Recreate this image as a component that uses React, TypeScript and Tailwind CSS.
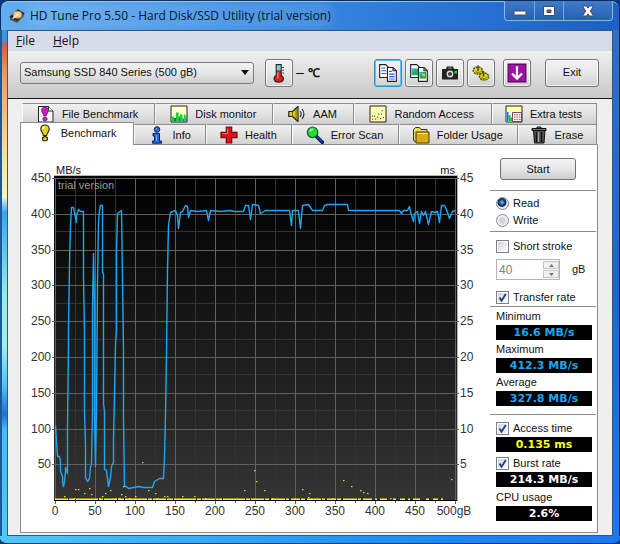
import React, { useState } from 'react';

type IconProps = { children: React.ReactNode; className?: string };

function Icon({ children, className = 'size-[18px]' }: IconProps) {
  return (
    <svg viewBox="0 0 18 18" className={`${className} shrink-0`} aria-hidden="true">
      {children}
    </svg>
  );
}

const FileBenchIcon = () => (
  <Icon>
    <path d="M1.500 1.500h10l4.500 4.500v11h-14.500z" fill="#f4f4f4" stroke="#222" />
    <path d="M11.500 1.500v4.500h4.500" fill="#fff" stroke="#222" />
    <path d="M8 2c-2.200 0-3.400 1.400-3.400 3.200C4.600 7.800 6.500 8.500 6.800 11h2.400c.3-2.500 2.200-3.200 2.200-5.800C11.400 3.400 10.200 2 8 2z" fill="#d416d4" stroke="#333" strokeWidth=".8" />
    <ellipse cx="8" cy="14" rx="2.200" ry="1.800" fill="#d416d4" stroke="#333" strokeWidth=".8" />
  </Icon>
);

const BenchIcon = () => (
  <Icon>
    <path d="M9 1C6.500 1 4.800 2.600 4.800 5c0 2.600 2.200 3.600 2.600 6.500h3.200C11 8.600 13.200 7.600 13.200 5c0-2.400-1.700-4-4.200-4z" fill="#e0d810" stroke="#222" strokeWidth="1.100" />
    <path d="M7 5c0-1.300.8-2.200 2-2.200" stroke="#fff" strokeWidth="1.300" fill="none" />
    <ellipse cx="9" cy="14.700" rx="2.500" ry="2.100" fill="#e0d810" stroke="#222" strokeWidth="1.100" />
  </Icon>
);

const DiskMonitorIcon = () => (
  <Icon>
    <path d="M1 1h16v16H1z" fill="#ffffd0" stroke="#222" />
    <path d="M1.500 16.500v-5H4v5zM6 16.500V7.500h2.500v9zM10 16.500V9.500h2.500v7zM14 16.500v-7h1.500v7z" fill="#10d820" />
    <path d="M4 16.500v-3.500h2v3.500zM8.500 16.500v-5H10v5zM12.500 16.500v-3H14v3zM15.500 16.500v-5h1v5z" fill="#2060e8" />
  </Icon>
);

const SpeakerIcon = () => (
  <Icon>
    <path d="M.8 6.500h3.700L10 1.500v15L4.500 11.500H.8z" fill="#e0d410" stroke="#222" strokeWidth="1.200" strokeLinejoin="round" />
    <path d="M4.500 6.500v5M8 4v10" stroke="#6b6400" />
    <path d="M12 6c1.300 1.700 1.300 4.300 0 6M14 4c2.300 3 2.300 7 0 10" stroke="#333" strokeWidth="1.200" fill="none" />
  </Icon>
);

const RandomIcon = () => (
  <Icon>
    <path d="M1 1h16v16H1z" fill="#ffffb0" stroke="#222" />
    <path d="M3 13.500h1.200v1.200H3zM5 10.500h1.200v1.200H5zM8 11.500h1.200v1.200H8zM11 13h1.200v1.200H11zM12 8.500h1.200v1.200H12z" fill="#e02020" />
    <path d="M3 10.500h1.200v1.200H3zM6 13.500h1.200v1.200H6zM9 8.500h1.200v1.200H9zM12.500 5h1.200v1.200h-1.200zM13.800 12H15v1.200h-1.200z" fill="#3050e0" />
  </Icon>
);

const ExtraIcon = () => (
  <Icon>
    <path d="M1 1h16v16H1z" fill="#ffffa8" stroke="#222" />
    <path d="M1.500 7h15v9.500h-15z" fill="#fff" />
    <path d="M1.500 7h2v9.500h-2z" fill="#2060e8" />
    <path d="M3.500 10h2v6.500h-2zM5.500 12.500h2v4h-2z" fill="#10c828" />
    <path d="M7.500 7.500h9v9h-9z" fill="#fff0f4" stroke="#333" strokeWidth=".8" />
    <path d="M9 9.700h6.500M9 12h6.500M9 14.300h6.500" stroke="#e03060" strokeDasharray="1.500 1" />
  </Icon>
);

const InfoIcon = () => (
  <Icon>
    <circle cx="9" cy="3.500" r="2.800" fill="#1e6ae0" stroke="#102050" />
    <path d="M5 7.500h6.500V15h2v2.200h-9V15h2v-5H5z" fill="#1e6ae0" stroke="#102050" />
    <path d="M8.500 9v6M8 3.500c0-.6.400-1 1-1" stroke="#6ab0ff" fill="none" />
  </Icon>
);

const HealthIcon = () => (
  <Icon>
    <path d="M6.300 1h5.400v5.300H17v5.400h-5.300V17H6.300v-5.300H1V6.300h5.300z" fill="#d81818" stroke="#6b0c0c" strokeWidth="1.200" strokeLinejoin="round" />
    <path d="M7.500 2.500v5H2.500" stroke="#ff7070" fill="none" />
  </Icon>
);

const ScanIcon = () => (
  <Icon>
    <path d="M10.500 10.500l5.800 5.800" stroke="#101050" strokeWidth="3.600" strokeLinecap="round" />
    <path d="M11 10.500l5 5" stroke="#2848d0" strokeWidth="1.500" />
    <circle cx="6.600" cy="6.300" r="5.300" fill="#28d838" stroke="#186020" strokeWidth="1.200" />
    <path d="M3.800 5.500c.5-1.500 1.500-2 3-2" stroke="#c8ffc8" strokeWidth="1.500" fill="none" />
  </Icon>
);

const FolderIcon = () => (
  <Icon>
    <path d="M1.500 3.500l2-2h4l1.500 2h6v12h-12l-1.500-1z" fill="#f0d860" stroke="#333" />
    <path d="M4 6h13v11H4z" fill="#d8ac18" stroke="#4a3a08" />
    <path d="M5.500 7.500h10" stroke="#fff0a0" />
  </Icon>
);

const EraseIcon = () => (
  <Icon>
    <path d="M3.500 4.500h11.500l-1 12.500h-9.500z" fill="#555" stroke="#111" />
    <path d="M6.500 6v10M11.500 6v10" stroke="#111" strokeWidth="1.500" />
    <path d="M8.500 6v10" stroke="#aaa" strokeWidth="1.200" />
    <path d="M2 2.500h14v2H2zM7 1h4v1.500H7z" fill="#777" stroke="#111" />
  </Icon>
);

const topTabs = [
  { label: 'File Benchmark', icon: <FileBenchIcon /> },
  { label: 'Disk monitor', icon: <DiskMonitorIcon /> },
  { label: 'AAM', icon: <SpeakerIcon /> },
  { label: 'Random Access', icon: <RandomIcon /> },
  { label: 'Extra tests', icon: <ExtraIcon /> },
];

const bottomTabs = [
  { label: 'Info', icon: <InfoIcon /> },
  { label: 'Health', icon: <HealthIcon /> },
  { label: 'Error Scan', icon: <ScanIcon /> },
  { label: 'Folder Usage', icon: <FolderIcon /> },
  { label: 'Erase', icon: <EraseIcon /> },
];

function Tab({ label, icon }: { label: string; icon: React.ReactNode }) {
  return (
    <button
      role="tab"
      aria-selected={false}
      className="flex h-[21px] items-center justify-center gap-[7px] whitespace-nowrap border-l border-t border-r border-[#8a8c92] border-l-[#f8f8f8] bg-linear-to-b from-[#f0f0f0] via-[#e2e2e2] to-[#cfcfcf] pr-0.5"
    >
      {icon}
      <span>{label}</span>
    </button>
  );
}

function ToolButton({ title, focused, children }: { title: string; focused?: boolean; children: React.ReactNode }) {
  return (
    <button
      title={title}
      className={`flex size-7 shrink-0 items-center justify-center rounded-[3px] border bg-linear-to-b from-[#f3f3f3] via-[#e8e8e8] to-[#d0d0d0] ${
        focused ? 'border-[#2f8fc4] ring-1 ring-inset ring-[#5cc4ee]' : 'border-[#777] ring-1 ring-inset ring-white/70'
      }`}
    >
      {children}
    </button>
  );
}

// Plot area is 400 x 322 units: 0.8 per gB across, 35.8 per 50 MB/s down
const TRANSFER_TRACE =
  '0,247 1,263 2,278 4,278 5,284 5,293 7,298 7,304 8,308 9,303 10,293 10,289 12,295 12,248 13,166 13,152 14,85 15,47 16,29 18,29 19,34 21,44 21,37 23,31 25,33 28,33 28,99 29,152 29,233 30,266 30,299 32,303 34,300 35,289 36,286 37,233 37,129 38,75 39,129 39,234 40,288 41,228 42,105 43,43 44,32 45,27 47,27 47,94 48,95 48,225 49,233 49,291 51,292 53,308 55,299 56,288 58,284 58,261 59,216 60,166 61,152 61,75 62,35 66,32 67,100 68,172 68,239 69,308 71,308 73,310 78,309 83,308 88,309 97,309 99,303 104,300 108,300 109,279 110,236 111,176 112,92 113,47 114,40 115,34 120,32 122,37 123,50 125,34 127,33 130,27 132,28 133,39 135,32 142,33 151,32 153,42 155,32 165,33 175,32 179,33 188,33 190,27 193,27 195,41 197,26 203,27 205,35 210,32 234,32 236,47 237,32 243,32 245,50 247,27 253,26 257,32 267,32 269,27 272,26 292,26 293,32 344,32 346,35 348,32 352,32 354,28 355,33 358,43 359,35 362,33 364,45 366,33 368,37 370,33 373,46 376,33 379,34 382,33 384,44 386,27 389,27 391,31 394,40 397,33 400,32';

const ACCESS_POINTS = [
  [9, 318], [20, 311], [23, 311], [29, 315], [34, 310], [36, 316], [47, 318], [50, 315], [55, 312], [66, 316],
  [68, 308], [70, 318], [80, 318], [87, 284], [93, 312], [100, 315], [109, 318], [112, 318], [127, 318], [139, 318],
  [189, 312], [199, 292], [201, 303], [209, 312], [247, 311], [254, 315], [253, 319], [288, 302], [296, 308],
  [305, 312], [308, 314], [312, 315], [335, 320], [396, 301], [19, 320], [44, 320], [60, 320], [64, 320], [74, 320], [102, 320],
  [217, 320], [277, 320], [150, 320],
];

const steps = Array.from({ length: 10 }, (_, i) => i);

function TransferChart() {
  return (
    <svg
      viewBox="-34 -33 469 386"
      className="h-auto w-full min-w-0 flex-1 self-start font-['Liberation_Sans',sans-serif] text-[12px]"
      role="img"
      aria-label="Transfer rate and access time"
    >
      <defs>
        <linearGradient id="plot" x1="0" y1="0" x2="0" y2="1">
          <stop offset="0" stopColor="#000" />
          <stop offset="1" stopColor="#343434" />
        </linearGradient>
      </defs>
      <rect x="-1" y="-3" width="404" height="326" fill="#b4b4b4" />
      <rect x="-1" y="-2" width="403" height="325" fill="url(#plot)" />

      <g stroke="#333" shapeRendering="crispEdges">
        {steps.map((i) => (
          <line key={`v${i}`} x1={i * 40 + 20.5} x2={i * 40 + 20.5} y1="0" y2="322" />
        ))}
        {steps.slice(0, 9).map((i) => (
          <line key={`h${i}`} x1="0" x2="401" y1={i * 35.8 + 17.9} y2={i * 35.8 + 17.9} />
        ))}
      </g>
      <g stroke="#606060">
        {Array.from({ length: 11 }, (_, i) => (
          <line key={`v${i}`} x1={i * 40 + 0.5} x2={i * 40 + 0.5} y1="0" y2="326" />
        ))}
        {steps.slice(0, 9).map((i) => (
          <line key={`h${i}`} x1="-3" x2="404" y1={Math.round(i * 35.8) + 0.5} y2={Math.round(i * 35.8) + 0.5} />
        ))}
      </g>
      <g stroke="#666">
        {steps.map((i) => (
          <line key={i} x1={i * 40 + 20.5} x2={i * 40 + 20.5} y1="323" y2="325" />
        ))}
      </g>

      <polyline points={TRANSFER_TRACE} transform="translate(.5 .5)" fill="none" stroke="#1ea6f2" strokeWidth="1.400" strokeLinejoin="round" />
      <line x1="-1" x2="402" y1="322.500" y2="322.500" stroke="#000" />
      <g stroke="#fff600" strokeWidth="1.500">
        <line x1="0" x2="200" y1="321.300" y2="321.300" strokeDasharray="13 1 6 1 22 1 4 1" />
        <line x1="200" x2="312" y1="321.300" y2="321.300" strokeDasharray="9 1 4 2 14 1 3 2" />
        <line x1="312" x2="388" y1="321.300" y2="321.300" strokeDasharray="5 3 2 3 7 6 3 4" />
      </g>
      <g fill="#e8e400">
        {ACCESS_POINTS.map(([x, y]) => (
          <rect key={`${x}-${y}`} x={x} y={y} width="1.500" height="1.200" />
        ))}
      </g>

      <text x="3" y="11" fontSize="11" fill="#9a9a9a">trial version</text>
      <g fill="#111" fontSize="11">
        <text x="1" y="-4">MB/s</text>
        <text x="400" y="-4" textAnchor="end">ms</text>
      </g>
      <g fill="#333">
        {steps.slice(0, 9).map((i) => (
          <React.Fragment key={i}>
            <text x="-4" y={Math.round(i * 35.8) + 4} textAnchor="end">{450 - i * 50}</text>
            <text x="405" y={Math.round(i * 35.8) + 4}>{45 - i * 5}</text>
          </React.Fragment>
        ))}
        {steps.map((i) => (
          <text key={i} x={i * 40} y="337" textAnchor="middle">{i * 50}</text>
        ))}
        <text x="399" y="337" textAnchor="middle">500gB</text>
      </g>
    </svg>
  );
}

function Check({ label, checked, onChange }: { label: string; checked: boolean; onChange: (v: boolean) => void }) {
  return (
    <label className="ml-1.5 flex h-[18px] items-center gap-1 whitespace-nowrap">
      <span className="grid shrink-0">
        <input
          type="checkbox"
          checked={checked}
          onChange={(e) => onChange(e.target.checked)}
          className="col-start-1 row-start-1 size-[13px] appearance-none border border-[#7c7f85] bg-linear-to-br from-[#ccd0d6] to-white ring-1 ring-inset ring-white"
        />
        {checked && (
          <svg viewBox="0 0 13 13" className="pointer-events-none col-start-1 row-start-1 size-[13px]">
            <path d="M3.500 6.500l2 3.300L9.800 3" fill="none" stroke="#27408b" strokeWidth="1.900" />
          </svg>
        )}
      </span>
      {label}
    </label>
  );
}

function Readout({ value, className }: { value: string; className: string }) {
  return (
    <output className={`ml-1.5 mr-1 block h-[15px] bg-black text-center font-['DejaVu_Sans',sans-serif] text-[11px] leading-[15px] font-bold ${className}`}>
      {value}
    </output>
  );
}

const Rule = ({ className = '' }: { className?: string }) => <hr className={`border-[#8c8c8c] ${className}`} />;

function SidePanel() {
  const [mode, setMode] = useState('read');
  const [shortStroke, setShortStroke] = useState(false);
  const [transfer, setTransfer] = useState(true);
  const [access, setAccess] = useState(true);
  const [burst, setBurst] = useState(true);

  return (
    <aside className="mr-px w-[106px] shrink-0 pt-[13px]">
      <button className="ml-2.5 block h-[22px] w-[76px] rounded-[3px] border border-[#707070] bg-linear-to-b from-[#f4f4f4] via-[#e6e6e6] to-[#cecece]">
        Start
      </button>
      <Rule className="mt-2.5 mb-1" />
      {['Read', 'Write'].map((name) => (
        <label key={name} className="ml-1.5 flex h-[17px] items-center gap-1">
          <input
            type="radio"
            name="mode"
            checked={mode === name.toLowerCase()}
            onChange={() => setMode(name.toLowerCase())}
            className="size-[13px] appearance-none rounded-full border border-[#84878c] bg-[radial-gradient(circle,#d0d3d8_30%,#fff_75%)] checked:bg-[radial-gradient(circle_at_45%_40%,#7cd0f4_0%,#174a7c_30%,#0c2c54_45%,#e4e8ec_55%)]"
          />
          {name}
        </label>
      ))}
      <Rule className="mt-0.5 mb-[5px]" />
      <Check label="Short stroke" checked={shortStroke} onChange={setShortStroke} />
      <div className="mt-1 mb-2 ml-1.5 flex h-[21px] items-center">
        <div className="flex h-full w-16 border border-[#b4b4b4] bg-white">
          <input aria-label="Short stroke size" defaultValue="40" disabled className="w-full min-w-0 pl-0.5 text-[12px] text-[#808080]" />
          <div className="flex w-4 shrink-0 flex-col gap-px py-px">
            <button disabled aria-label="Increase" className="flex flex-1 items-center justify-center border border-[#c4c4c4] bg-[#f0f0f0]">
              <svg viewBox="0 0 5 3" className="h-[3px] w-[5px]"><path d="M0 3l2.500-3L5 3z" fill="#777" /></svg>
            </button>
            <button disabled aria-label="Decrease" className="flex flex-1 items-center justify-center border border-[#c4c4c4] bg-[#f0f0f0]">
              <svg viewBox="0 0 5 3" className="h-[3px] w-[5px]"><path d="M0 0l2.500 3L5 0z" fill="#777" /></svg>
            </button>
          </div>
        </div>
        <span className="ml-3">gB</span>
      </div>
      <Check label="Transfer rate" checked={transfer} onChange={setTransfer} />
      <Rule />
      <div className="ml-1.5 h-[18px] leading-[18px]">Minimum</div>
      <Readout value="16.6 MB/s" className="text-[#1ea6f2]" />
      <div className="ml-1.5 h-[18px] leading-[18px]">Maximum</div>
      <Readout value="412.3 MB/s" className="text-[#1ea6f2]" />
      <div className="ml-1.5 h-[18px] leading-[18px]">Average</div>
      <Readout value="327.8 MB/s" className="text-[#1ea6f2]" />
      <Rule className="mt-2 mb-1" />
      <Check label="Access time" checked={access} onChange={setAccess} />
      <Readout value="0.135 ms" className="text-[#ffff20]" />
      <div className="mt-0.5">
        <Check label="Burst rate" checked={burst} onChange={setBurst} />
      </div>
      <Readout value="214.3 MB/s" className="text-white" />
      <div className="mt-px ml-1.5 h-[18px] leading-[18px]">CPU usage</div>
      <Readout value="2.6%" className="text-white" />
    </aside>
  );
}

function TitleBar() {
  return (
    <header className="flex h-[30px] items-center rounded-t-lg border border-b-0 border-[#0c2a58] bg-linear-to-r from-[#62adf0] via-[#3b8de4] via-40% to-[#1c5fc6] pl-2 pr-1.5 shadow-[inset_0_1px_0_#8cc4f4]">
      <Icon className="size-4">
        <path d="M1 10L10 2l7 4-8 9z" fill="#2a2a2a" stroke="#111" />
        <path d="M1 10v3l8 4v-2zM17 6v3l-8 8v-2z" fill="#555" />
        <ellipse cx="9.500" cy="7.500" rx="5" ry="4" fill="#f4c890" stroke="#a87840" />
        <circle cx="9.500" cy="7.500" r="1.300" fill="#fff" />
        <path d="M4 12l4-3" stroke="#eee" strokeWidth="1.500" />
      </Icon>
      <h1 className="ml-[5px] whitespace-nowrap rounded-full bg-white/10 font-['Open_Sans',sans-serif] text-[12px] leading-5 text-[#0a1526] shadow-[0_0_8px_4px_rgba(255,255,255,0.1)]">
        HD Tune Pro 5.50 - Hard Disk/SSD Utility (trial version)
      </h1>
      <div className="ml-auto flex h-5 self-start divide-x divide-[#7ba6dc] rounded-b-[4px] border border-t-0 border-[#8db4e4] bg-linear-to-b from-[#3f7ccb] to-[#2460b4]">
        <button aria-label="Minimize" className="flex w-[30px] items-center justify-center">
          <svg viewBox="0 0 14 12" className="h-3 w-3.5"><path d="M1 6h12v4H1z" fill="#fff" stroke="#444c5c" /></svg>
        </button>
        <button aria-label="Maximize" className="flex w-[29px] items-center justify-center">
          <svg viewBox="0 0 14 12" className="h-3 w-3.5"><path d="M1.500 1.500h11v9h-11zM5 5v2.500h4V5z" fillRule="evenodd" fill="#fff" stroke="#444c5c" /></svg>
        </button>
        <button aria-label="Close" className="flex w-12 items-center justify-center">
          <svg viewBox="0 0 14 12" className="h-3 w-3.5"><path d="M1.500 1h4L7 3.200 8.500 1h4L9.300 6l3.200 5h-4L7 8.800 5.500 11h-4L4.700 6z" fill="#fff" stroke="#444c5c" /></svg>
        </button>
      </div>
    </header>
  );
}

function Toolbar() {
  return (
    <div className="flex h-12 items-center border-b border-[#1a1a1a] bg-linear-to-b from-[#f0f0f0] to-[#c8c8c8] pr-[13px] pb-1 pl-3">
      <div className="grid w-[234px] items-center">
        <select aria-label="Drive" className="col-start-1 row-start-1 h-[22px] w-full appearance-none rounded-[3px] border border-[#7b7b7b] bg-linear-to-b from-[#f2f2f2] via-[#e6e6e6] to-[#d0d0d0] pl-[3px]">
          <option>Samsung SSD 840 Series (500 gB)</option>
        </select>
        <svg viewBox="0 0 8 5" className="pointer-events-none col-start-1 row-start-1 mr-[5px] h-[5px] w-2 justify-self-end">
          <path d="M0 0h8L4 5z" fill="#111" />
        </svg>
      </div>
      <div className="ml-[11px] flex items-center">
        <ToolButton title="Temperature">
          <Icon className="size-5">
            <path d="M6.500 1.500h4.500V11c1.300.7 2 1.800 2 3 0 2-1.800 3.300-4.200 3.300S4.500 16 4.500 14c0-1.200.7-2.300 2-3z" fill="#d81c1c" stroke="#222" />
            <path d="M7 2h3.500v4.500H7z" fill="#5ce0e8" />
            <path d="M8 8v6" stroke="#ff9090" />
            <path d="M12 4h1.500M12 6.500h1.500M12 9h1.500" stroke="#333" />
          </Icon>
        </ToolButton>
        <span className="ml-[3px] text-[14px]">– <span className="text-[12px] font-bold">℃</span></span>
      </div>
      <div className="ml-auto flex items-center gap-[3px]">
        <ToolButton title="Copy text" focused>
          <Icon className="size-5">
            <path d="M1.500 1.500h5.500l2 2v9.500h-7.500z" fill="#fff" stroke="#222" />
            <path d="M3 4.500h3.500M3 7h4.500M3 9.500h4.500" stroke="#2468d8" />
            <path d="M8.500 4h5l3 3v9.500h-8z" fill="#fff" stroke="#222" />
            <path d="M13.500 4v3h3" fill="none" stroke="#222" />
            <path d="M10 7.500h2.500M10 10h5M10 12.200h5M10 14.400h5" stroke="#2468d8" strokeWidth="1.100" />
          </Icon>
        </ToolButton>
        <ToolButton title="Copy screenshot">
          <Icon className="size-5">
            <path d="M1.500 1.500h5.500l2 2v9.500h-7.500z" fill="#fff" stroke="#222" />
            <path d="M2.500 5h5.500v6H2.500z" fill="#24b050" />
            <path d="M2.500 5h3v3h-3z" fill="#30b0e8" />
            <path d="M8.500 4h5l3 3v9.500h-8z" fill="#fff" stroke="#222" />
            <path d="M13.500 4v3h3" fill="none" stroke="#222" />
            <path d="M9.500 8h6v6h-6z" fill="#20a848" />
            <path d="M9.500 8h3v3h-3z" fill="#28b8e0" />
            <path d="M12 9.500h2.500V12H12z" fill="#e8c020" />
          </Icon>
        </ToolButton>
        <ToolButton title="Save screenshot">
          <Icon>
            <path d="M6 2.500h6l1 2.500h4v10.500H1V5h4z" fill="#222" />
            <circle cx="9" cy="10" r="3.400" fill="#ddd" />
            <circle cx="9" cy="10" r="2.100" fill="#444" />
            <path d="M13.500 7H16v2.500h-2.500z" fill="#28d840" />
            <path d="M7.500 4h3" stroke="#aaa" />
          </Icon>
        </ToolButton>
        <ToolButton title="Options">
          <Icon>
            <ellipse cx="5.800" cy="6.500" rx="4.600" ry="3.600" fill="#e0d410" stroke="#5c5600" strokeWidth="1.500" strokeDasharray="2 .8" />
            <ellipse cx="12" cy="12.500" rx="4.600" ry="3.600" fill="#e0d410" stroke="#5c5600" strokeWidth="1.500" strokeDasharray="2 .8" />
            <path d="M6 1.500v5.500M11.500 7v5.500" stroke="#444" strokeWidth="1.500" />
            <path d="M3.500 7.500c1 1.200 4 1.200 5 0M9.500 13.500c1 1.200 4 1.200 5 0" stroke="#7c7400" fill="none" />
          </Icon>
        </ToolButton>
        <div className="ml-[5px]">
          <ToolButton title="Minimize to tray">
            <Icon className="size-5">
              <path d="M1 1h16v16H1z" fill="#a010a4" stroke="#4c084e" />
              <path d="M9 3v11M4.500 9.500L9 14l4.500-4.500" fill="none" stroke="#fff" strokeWidth="2" />
            </Icon>
          </ToolButton>
        </div>
        <button className="ml-[11px] h-7 w-[54px] rounded-[3px] border border-[#777] bg-linear-to-b from-[#f3f3f3] via-[#e8e8e8] to-[#d0d0d0] text-[11px] ring-1 ring-inset ring-white/70">
          Exit
        </button>
      </div>
    </div>
  );
}

const App = () => {
  return (
    <div className="flex min-h-screen flex-col bg-[#0b3a80] font-['Liberation_Sans',Arial,sans-serif] text-[11px] text-[#111]">
      <TitleBar />
      <div className="flex flex-1">
        {/* Glass edge with the wallpaper showing through */}
        <div className="w-[7px] shrink-0 border-l-2 border-[#1c5a94] bg-[linear-gradient(to_bottom,#3f94e0_0,#3f94e0_2%,#d0604c_3%,#e0a070_9%,#f0d8a0_22%,#f8f4d0_33%,#3aa4f4_36%,#48b0f4_39%,#90ece4_52%,#a0f0ea_62%,#50c4f8_70%,#2070d8_76%,#48b8fa_79%,#50c8fa_100%)]" />
        <main className="flex min-w-0 flex-1 flex-col border border-[#3c5470] bg-[#efefef]">
          <nav className="flex h-5 items-center gap-[18px] bg-[#d5dce8] pl-2 font-['Open_Sans',sans-serif] text-[12px] leading-5">
            <button><span className="underline">F</span>ile</button>
            <button><span className="underline">H</span>elp</button>
          </nav>
          <Toolbar />
          <div className="flex flex-1 flex-col pt-1 pr-3.5 pb-0.5 pl-3">
            <div role="tablist" className="-mb-px">
              <div className="mr-px ml-0.5 grid grid-cols-[133fr_118fr_80fr_138fr_105fr]">
                {topTabs.map((tab) => (
                  <Tab key={tab.label} {...tab} />
                ))}
              </div>
              <div className="mr-px grid grid-cols-[114fr_72fr_86fr_106fr_119fr_79fr]">
                <button
                  role="tab"
                  aria-selected
                  className="relative -mt-0.5 flex items-center justify-center gap-[7px] border border-b-0 border-[#8a8c92] bg-white pr-0.5 pb-0.5"
                >
                  <BenchIcon />
                  <span>Benchmark</span>
                </button>
                {bottomTabs.map((tab) => (
                  <Tab key={tab.label} {...tab} />
                ))}
              </div>
            </div>
            <section role="tabpanel" className="flex flex-1 border border-[#8a8c92] bg-white">
              <TransferChart />
              <SidePanel />
            </section>
          </div>
        </main>
        <div className="w-[7px] shrink-0 border-r border-[#0c2a58] bg-linear-to-b from-[#2f6fc4] via-[#1c66cc] to-[#1a78ee]" />
      </div>
      <footer className="h-2 rounded-b-md border-b border-[#0c2a58] bg-linear-to-r from-[#50c8fa] via-[#2090f4] via-60% to-[#1a78ee]" />
    </div>
  );
};

export default App;
